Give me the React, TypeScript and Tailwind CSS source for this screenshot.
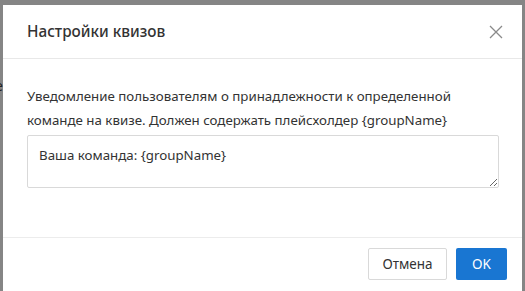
import React from "react";

export default function App() {
  return (
    <div
      className="relative h-[291px] w-[525px] overflow-hidden bg-[#858585] pl-[3px] pr-[3px] pt-[5px]"
      style={{ fontFamily: '"Noto Sans", "Open Sans", sans-serif' }}
    >
      <span className="absolute left-[-5px] top-[76px] text-[14px] leading-[20px] text-[#222]">e</span>
      <div className="flex h-[300px] flex-col bg-white">
        <div className="flex h-[54px] items-center justify-between border-b border-[#e8e8e8] pl-[24px] pr-[19px]">
          <h2 className="text-[15.3px] font-medium text-[#333]">Настройки квизов</h2>
          <svg width="14" height="14" viewBox="0 0 14 14" className="text-[#8a8a8a]">
            <path d="M1 1 L13 13 M13 1 L1 13" stroke="currentColor" strokeWidth="1.3" />
          </svg>
        </div>
        <div className="flex h-[179px] flex-col border-b border-[#ececec] px-[24px] pt-[25px]">
          <p className="text-[13.3px] leading-[24px] text-[#333]">
            Уведомление пользователям о принадлежности к определенной команде на квизе. Должен содержать плейсхолдер {"{groupName}"}
          </p>
          <textarea
            className="mt-[3px] h-[53px] w-[472px] resize-y rounded-[2px] border border-[#d9d9d9] px-[11px] py-[9px] text-[13.3px] leading-[20px] text-[#333] outline-none"
            style={{ fontFamily: '"Noto Sans", "Open Sans", sans-serif' }}
            defaultValue="Ваша команда: {groupName}"
          />
        </div>
        <div className="flex justify-end gap-[9px] pr-[15px] pt-[10px]">
          <button className="h-[32px] w-[79px] rounded-[2px] border border-[#d9d9d9] bg-white text-[13.5px] text-[#333]">
            Отмена
          </button>
          <button className="h-[32px] w-[51px] rounded-[2px] bg-[#1976d2] text-[13.5px] text-white">
            OK
          </button>
        </div>
      </div>
    </div>
  );
}
